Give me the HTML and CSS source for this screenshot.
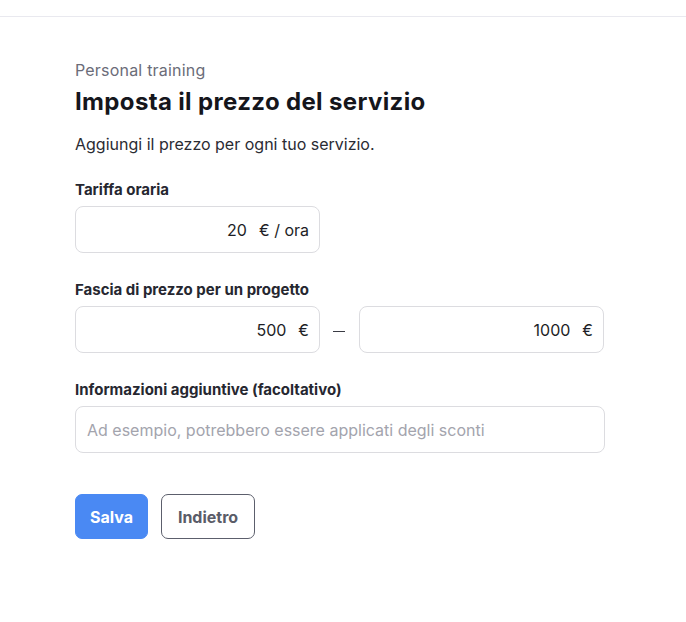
FILE: index.html
```html
<!DOCTYPE html>
<html lang="it">
<head>
<meta charset="utf-8">
<link rel="stylesheet" href="styles.css">
</head>
<body>
<div class="topbar"></div>
<main class="page">
  <p class="eyebrow">Personal training</p>
  <h1 class="title">Imposta il prezzo del servizio</h1>
  <p class="lead">Aggiungi il prezzo per ogni tuo servizio.</p>

  <div class="field">
    <label class="label">Tariffa oraria</label>
    <div class="input w-half"><span class="val">20</span><span class="unit">€ / ora</span></div>
  </div>

  <div class="field">
    <label class="label">Fascia di prezzo per un progetto</label>
    <div class="range">
      <div class="input w-half"><span class="val">500</span><span class="unit">€</span></div>
      <span class="dash"></span>
      <div class="input w-half"><span class="val">1000</span><span class="unit">€</span></div>
    </div>
  </div>

  <div class="field">
    <label class="label">Informazioni aggiuntive (facoltativo)</label>
    <div class="input w-full left"><span class="placeholder">Ad esempio, potrebbero essere applicati degli sconti</span></div>
  </div>

  <div class="actions">
    <button class="btn primary">Salva</button>
    <button class="btn secondary">Indietro</button>
  </div>
</main>
</body>
</html>
```

FILE: styles.css
```css
* { box-sizing: border-box; }
html, body { margin: 0; padding: 0; background: #fff; }
body {
  font-family: Inter, "Noto Sans", sans-serif;
  color: #1d1e26;
}
.topbar {
  height: 17px;
  border-bottom: 1px solid #e9e9ef;
}
.page {
  padding: 43px 0 0 75px;
  width: 604px;
}
.eyebrow {
  margin: 0;
  font-size: 16px;
  line-height: 20px;
  color: #6b6c78;
  letter-spacing: 0.2px;
}
.title {
  margin: 7px 0 0;
  font-size: 24px;
  line-height: 30px;
  font-weight: 700;
  color: #15161c;
  letter-spacing: 0.35px;
}
.lead {
  margin: 17px 0 0;
  font-size: 16px;
  line-height: 20px;
  color: #2a2b33;
}
.field {
  margin-top: 27px;
  display: flex;
  flex-direction: column;
}
.field + .field { margin-top: 28px; }
.label {
  font-size: 15px;
  line-height: 18px;
  font-weight: 700;
  color: #262730;
  margin-bottom: 7px;
}
.input {
  height: 47px;
  border: 1px solid #dcdce0;
  border-radius: 8px;
  display: flex;
  align-items: center;
  justify-content: flex-end;
  gap: 12px;
  padding: 0 10px;
  font-size: 16px;
  color: #1d1e26;
}
.input.left { justify-content: flex-start; padding: 0 11px; }
.w-half { width: 245px; }
.w-full { width: 530px; }
.placeholder { color: #a3a4ad; }
.range {
  display: flex;
  align-items: center;
}
.dash {
  width: 12px;
  height: 1px;
  background: #3a3b44;
  margin: 4px 14px 0 13px;
}
.actions {
  margin-top: 41px;
  display: flex;
  gap: 13px;
}
.btn {
  height: 45px;
  border-radius: 7px;
  font-family: inherit;
  font-size: 16px;
  font-weight: 700;
  padding: 0 14px;
  cursor: pointer;
}
.primary {
  background: #4a89f3;
  border: 1px solid #4a89f3;
  color: #fff;
  width: 73px;
}
.secondary {
  background: #fff;
  border: 1px solid #5c5f6c;
  color: #5a5c68;
  width: 94px;
}
```
